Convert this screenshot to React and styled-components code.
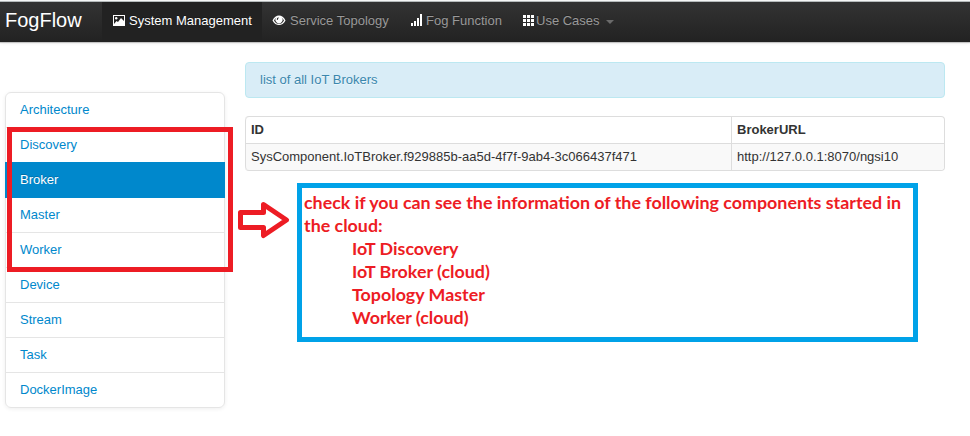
import React from "react";
import styled, { createGlobalStyle } from "styled-components";

const GlobalStyle = createGlobalStyle`
  *, *::before, *::after { box-sizing: border-box; }
  body {
    margin: 0;
    background: #fff;
    color: #333;
    font: 13px/18px "Liberation Sans", Arial, sans-serif;
  }
`;

const Page = styled.div`
  position: relative;
  width: 970px;
  height: 436px;
  overflow: hidden;
  border-top: 1px solid #f5f6f6;
`;

const Navbar = styled.header`
  display: flex;
  height: 41px;
  border-top: 1px solid #b5babb;
  background: linear-gradient(#333, #222);
  background-clip: padding-box;
  box-shadow: 0 1px 1px rgba(0, 0, 0, 0.2), 0 1px 4px rgba(0, 0, 0, 0.07);
`;

const Brand = styled.a`
  width: 102px;
  padding: 8px 0 0 5px;
  color: #fff;
  font-size: 20px;
  line-height: 20px;
`;

const NavLink = styled.a`
  display: flex;
  align-items: flex-start;
  width: ${(p) => p.$width}px;
  padding: 10px 0 0 10px;
  color: ${(p) => (p.$active ? "#fff" : "#999")};
  background: ${(p) => (p.$active ? "#222" : "transparent")};
  text-shadow: 0 -1px 0 rgba(0, 0, 0, 0.25);
  white-space: nowrap;
`;

const Glyph = styled.svg`
  flex: none;
  width: 14px;
  height: 14px;
  margin: 2px ${(p) => p.$gap ?? 4}px 0 0;
  fill: #fff;
`;

const Caret = styled.span`
  margin: 8px 0 0 6px;
  border: 4px solid transparent;
  border-top-color: #6b6b6b;
  border-bottom: 0;
`;

const Columns = styled.main`
  display: grid;
  grid-template-columns: 220px 700px;
  column-gap: 20px;
  align-items: start;
  padding: 20px 0 0 5px;
`;

const Sidebar = styled.nav`
  margin-top: 30px;
  border-radius: 6px;
  box-shadow: 0 1px 4px rgba(0, 0, 0, 0.067);
`;

const SideLink = styled.a`
  display: block;
  height: 36px;
  margin-bottom: -1px;
  padding: 8px 14px;
  border: 1px solid #e5e5e5;
  color: #0088cc;

  &:first-child { border-radius: 6px 6px 0 0; }
  &:last-child { border-radius: 0 0 6px 6px; margin-bottom: 0; }

  ${(p) => p.$active && `
    position: relative;
    border-color: #0088cc;
    background: #0088cc;
    color: #fff;
    text-shadow: 0 -1px 0 rgba(0, 0, 0, 0.2);
  `}
`;

const Notice = styled.div`
  height: 36px;
  margin-bottom: 18px;
  padding: 8px 14px;
  border: 1px solid #bce8f1;
  border-radius: 4px;
  background: #d9edf7;
  color: #3a87ad;
  text-shadow: 0 1px 0 rgba(255, 255, 255, 0.5);
`;

const Table = styled.table`
  width: 700px;
  table-layout: fixed;
  border: 1px solid #ddd;
  border-left: 0;
  border-radius: 4px;
  border-collapse: separate;
  border-spacing: 0;

  th, td {
    height: 26px;
    padding: 4px 5px;
    border-left: 1px solid #ddd;
    text-align: left;
    line-height: 18px;
  }
  th:first-child { width: 486px; border-top-left-radius: 4px; }
  td { height: 27px; border-top: 1px solid #ddd; background: #f9f9f9; }
  td:first-child { border-bottom-left-radius: 4px; }
  td:last-child { border-bottom-right-radius: 4px; }
`;

const Highlight = styled.div`
  position: absolute;
  left: 7px;
  top: 126px;
  width: 226px;
  height: 145px;
  border: 5px solid #ed1c24;
`;

const Arrow = styled.svg`
  position: absolute;
  left: 238px;
  top: 201px;
  width: 52px;
  height: 37px;
  fill: none;
  stroke: #ed1c24;
  stroke-width: 5;
  stroke-linejoin: round;
`;

const Callout = styled.aside`
  position: absolute;
  left: 297px;
  top: 182px;
  width: 621px;
  height: 159px;
  padding: 3px 0 0 2px;
  border: 5px solid #00a2e8;
  background: #fff;
  color: #ed1c24;
  font: bold 17.85px/23px Lato, "Open Sans", sans-serif;
  white-space: nowrap;
`;

const CalloutLine = styled.div`
  padding-left: ${(p) => (p.$indent ? 48 : 0)}px;
`;

const sections = [
  "Architecture", "Discovery", "Broker", "Master", "Worker",
  "Device", "Stream", "Task", "DockerImage",
];

const components = ["IoT Discovery", "IoT Broker (cloud)", "Topology Master", "Worker (cloud)"];

const PictureIcon = () => (
  <Glyph viewBox="0 0 14 14" $gap={3}>
    <path fillRule="evenodd" d="M1 1h12v11H1zM2 2v8l2.5-3 1.5 1 3-4 3 3V2z" />
    <circle cx="4.2" cy="4.2" r="1.2" />
  </Glyph>
);

const EyeIcon = () => (
  <Glyph viewBox="0 0 14 14">
    <path fillRule="evenodd" d="M.5 6.5C3.5-.2 10.5-.2 13.5 6.5C10.5 12.5 3.5 12.5.5 6.5zM2 6.5C4.5 11.2 9.5 11.2 12 6.5Q11 4.2 9.5 3.4A3.5 3.5 0 1 1 4.5 3.4Q3 4.2 2 6.5z" />
    <path d="M6.300 3.200a2.200 2.200 0 0 0-1.500 2.500l1 .2q0-1.300 1-1.800z" fill="#2d2d2d" />
  </Glyph>
);

const SignalIcon = () => (
  <Glyph viewBox="0 0 14 14" $gap={2} shapeRendering="crispEdges">
    <path d="M1 9h2v3H1zM4 7h2v5H4zM7 4h2v8H7zM10 0h2v12h-2z" />
  </Glyph>
);

const GridIcon = () => (
  <Glyph viewBox="0 0 14 14" $gap={0} shapeRendering="crispEdges">
    <path d="M1 1h3v3H1zM5 1h3v3H5zM9 1h3v3H9zM1 5h3v3H1zM5 5h3v3H5zM9 5h3v3H9zM1 9h3v3H1zM5 9h3v3H5zM9 9h3v3H9z" />
  </Glyph>
);

export default function App() {
  return (
    <>
      <GlobalStyle />
      <Page>
        <Navbar>
          <Brand>FogFlow</Brand>
          <NavLink $active $width={160}><PictureIcon />System Management</NavLink>
          <NavLink $width={138}><EyeIcon />Service Topology</NavLink>
          <NavLink $width={112}><SignalIcon />Fog Function</NavLink>
          <NavLink $width={110}><GridIcon />Use Cases<Caret /></NavLink>
        </Navbar>
        <Columns>
          <Sidebar>
            {sections.map((name) => (
              <SideLink key={name} $active={name === "Broker"}>{name}</SideLink>
            ))}
          </Sidebar>
          <section>
            <Notice>list of all IoT Brokers</Notice>
            <Table>
              <thead>
                <tr><th>ID</th><th>BrokerURL</th></tr>
              </thead>
              <tbody>
                <tr>
                  <td>SysComponent.IoTBroker.f929885b-aa5d-4f7f-9ab4-3c066437f471</td>
                  <td>http://127.0.0.1:8070/ngsi10</td>
                </tr>
              </tbody>
            </Table>
          </section>
        </Columns>
        <Highlight />
        <Arrow viewBox="0 0 52 37">
          <path d="M2.5 10.5H25.5V2.5L48.5 18L25.5 33.5V25.5H2.5Z" />
        </Arrow>
        <Callout>
          <CalloutLine>check if you can see the information of the following components started in</CalloutLine>
          <CalloutLine>the cloud:</CalloutLine>
          {components.map((name) => (
            <CalloutLine key={name} $indent>{name}</CalloutLine>
          ))}
        </Callout>
      </Page>
    </>
  );
}
